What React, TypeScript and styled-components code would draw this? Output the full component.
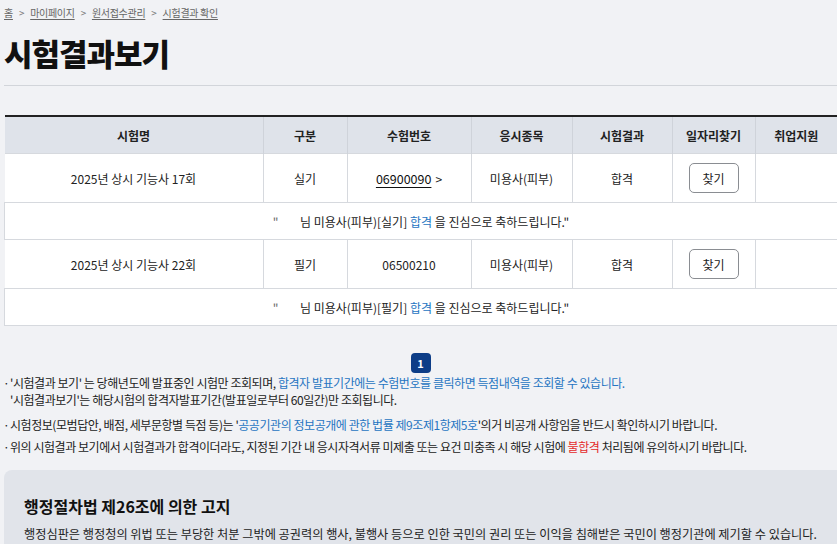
import React from "react";
import styled, { createGlobalStyle } from "styled-components";

const GlobalStyle = createGlobalStyle`
    html, body {
        margin: 0;
        padding: 0;
        background: #f1f2f5;
        overflow: hidden;
    }
    body {
        font-family: "Noto Sans CJK KR", "Noto Sans", sans-serif;
        color: #222;
    }
`;

const Page = styled.div`
    width: 837px;
    padding-left: 4px;
    box-sizing: border-box;
`;

const Breadcrumb = styled.nav`
    display: flex;
    align-items: center;
    gap: 5px;
    height: 22px;
    padding-top: 1px;
    font-size: 10px;
    letter-spacing: -0.3px;
    color: #666;
`;

const Crumb = styled.a`
    color: #666;
    text-decoration: underline;
    text-underline-offset: 2px;
`;

const Sep = styled.span`
    font-size: 10px;
    color: #777;
    margin: 0 1px;
`;

const Title = styled.h1`
    margin: 9px 0 0;
    font-size: 31px;
    font-weight: 800;
    letter-spacing: -1px;
    line-height: 42px;
    color: #111;
    padding-bottom: 11px;
    border-bottom: 1px solid #d2d5da;
`;

const Table = styled.table`
    margin-top: 29px;
    width: 833px;
    border-collapse: collapse;
    table-layout: fixed;
    border-top: 2px solid #222;
    font-size: 12px;
`;

const Th = styled.th<{ w?: number }>`
    width: ${({ w }) => (w ? `${w}px` : "auto")};
    height: 36px;
    background: #dfe3ea;
    font-weight: 700;
    color: #222;
    border-left: 1px solid #cfd3da;
    padding: 0;
    &:first-child {
        border-left: none;
    }
`;

const Td = styled.td`
    height: 48px;
    text-align: center;
    background: #fff;
    border: 1px solid #d6d9de;
    padding: 0;
    color: #222;
`;

const MsgCell = styled.td`
    height: 36px;
    text-align: center;
    background: #fff;
    border: 1px solid #d6d9de;
    border-right: none;
    padding: 0;
`;

const Quote = styled.span`
    color: #666;
`;

const Blue = styled.span`
    color: #2675c2;
`;

const Red = styled.span`
    color: #e42a2a;
`;

const NumLink = styled.a`
    color: #111;
    font-size: 12.5px;
    text-decoration: underline;
    text-underline-offset: 3px;
`;

const Chevron = styled.span`
    margin-left: 4px;
    font-size: 12px;
`;

const FindButton = styled.button`
    width: 50px;
    height: 30px;
    border: 1px solid #8a8d92;
    border-radius: 5px;
    background: #fff;
    font-family: inherit;
    font-size: 12px;
    color: #222;
`;

const Pager = styled.div`
    display: flex;
    justify-content: center;
    margin-top: 27px;
`;

const PageNum = styled.span`
    display: flex;
    align-items: center;
    justify-content: center;
    width: 20px;
    height: 20px;
    border-radius: 4px;
    background: #0d3d87;
    color: #fff;
    font-size: 11px;
    font-weight: 700;
`;

const Notes = styled.ul`
    list-style: none;
    margin: 0;
    padding: 0;
    font-size: 12px;
    letter-spacing: -0.45px;
    line-height: 17px;
    color: #222;
`;

const Note = styled.li<{ gap: number }>`
    margin-top: ${({ gap }) => gap}px;
    padding-left: 6px;
    position: relative;
    &::before {
        content: "·";
        position: absolute;
        left: -1px;
        top: 0;
    }
`;

const NoticeBox = styled.section`
    margin-top: 15px;
    background: #e1e4ea;
    border-radius: 8px 0 0 0;
    padding: 24px 20px 20px;
`;

const NoticeTitle = styled.h2`
    margin: 0;
    font-size: 16px;
    font-weight: 700;
    color: #111;
`;

const NoticeText = styled.p`
    margin: 7px 0 0;
    font-size: 12.2px;
    color: #222;
    white-space: nowrap;
`;

interface ResultRow {
    name: string;
    kind: string;
    number: string;
    linked: boolean;
    subject: string;
    result: string;
}

const rows: ResultRow[] = [
    { name: "2025년 상시 기능사 17회", kind: "실기", number: "06900090", linked: true, subject: "미용사(피부)", result: "합격" },
    { name: "2025년 상시 기능사 22회", kind: "필기", number: "06500210", linked: false, subject: "미용사(피부)", result: "합격" },
];

// last column takes whatever is left
const columns: [string, number?][] = [
    ["시험명", 258],
    ["구분", 83],
    ["수험번호", 123],
    ["응시종목", 100],
    ["시험결과", 99],
    ["일자리찾기", 82],
    ["취업지원"],
];

export default function App() {
    return (
        <Page>
            <GlobalStyle />
            <Breadcrumb>
                <Crumb>홈</Crumb>
                <Sep>&gt;</Sep>
                <Crumb>마이페이지</Crumb>
                <Sep>&gt;</Sep>
                <Crumb>원서접수관리</Crumb>
                <Sep>&gt;</Sep>
                <Crumb>시험결과 확인</Crumb>
            </Breadcrumb>
            <Title>시험결과보기</Title>

            <Table>
                <thead>
                    <tr>
                        {columns.map(([label, w]) => (
                            <Th key={label} w={w}>{label}</Th>
                        ))}
                    </tr>
                </thead>
                <tbody>
                    {rows.map((row) => (
                        <React.Fragment key={row.number}>
                            <tr>
                                <Td style={{ borderLeft: "none" }}>{row.name}</Td>
                                <Td>{row.kind}</Td>
                                <Td>
                                    {row.linked ? (
                                        <>
                                            <NumLink>{row.number}</NumLink>
                                            <Chevron>&gt;</Chevron>
                                        </>
                                    ) : (
                                        row.number
                                    )}
                                </Td>
                                <Td>{row.subject}</Td>
                                <Td>{row.result}</Td>
                                <Td>
                                    <FindButton>찾기</FindButton>
                                </Td>
                                <Td style={{ borderRight: "none" }} />
                            </tr>
                            <tr>
                                <MsgCell colSpan={7}>
                                    <Quote>"</Quote>&nbsp;&nbsp;&nbsp;&nbsp;&nbsp;&nbsp;&nbsp;&nbsp;님 {row.subject}[{row.kind}] <Blue>{row.result}</Blue> 을 진심으로 축하드립니다."
                                </MsgCell>
                            </tr>
                        </React.Fragment>
                    ))}
                </tbody>
            </Table>

            <Pager>
                <PageNum>1</PageNum>
            </Pager>

            <Notes>
                <Note gap={1}>
                    '시험결과 보기' 는 당해년도에 발표중인 시험만 조회되며, <Blue>합격자 발표기간에는 수험번호를 클릭하면 득점내역을 조회할 수 있습니다.</Blue>
                    <br />
                    '시험결과보기'는 해당시험의 합격자발표기간(발표일로부터 60일간)만 조회됩니다.
                </Note>
                <Note gap={8}>
                    시험정보(모범답안, 배점, 세부문항별 득점 등)는 '<Blue>공공기관의 정보공개에 관한 법률 제9조제1항제5호</Blue>'의거 비공개 사항임을 반드시 확인하시기 바랍니다.
                </Note>
                <Note gap={5}>
                    위의 시험결과 보기에서 시험결과가 합격이더라도, 지정된 기간 내 응시자격서류 미제출 또는 요건 미충족 시 해당 시험에 <Red>불합격</Red> 처리됨에 유의하시기 바랍니다.
                </Note>
            </Notes>

            <NoticeBox>
                <NoticeTitle>행정절차법 제26조에 의한 고지</NoticeTitle>
                <NoticeText>
                    행정심판은 행정청의 위법 또는 부당한 처분 그밖에 공권력의 행사, 불행사 등으로 인한 국민의 권리 또는 이익을 침해받은 국민이 행정기관에 제기할 수 있습니다.
                </NoticeText>
            </NoticeBox>
        </Page>
    );
}
